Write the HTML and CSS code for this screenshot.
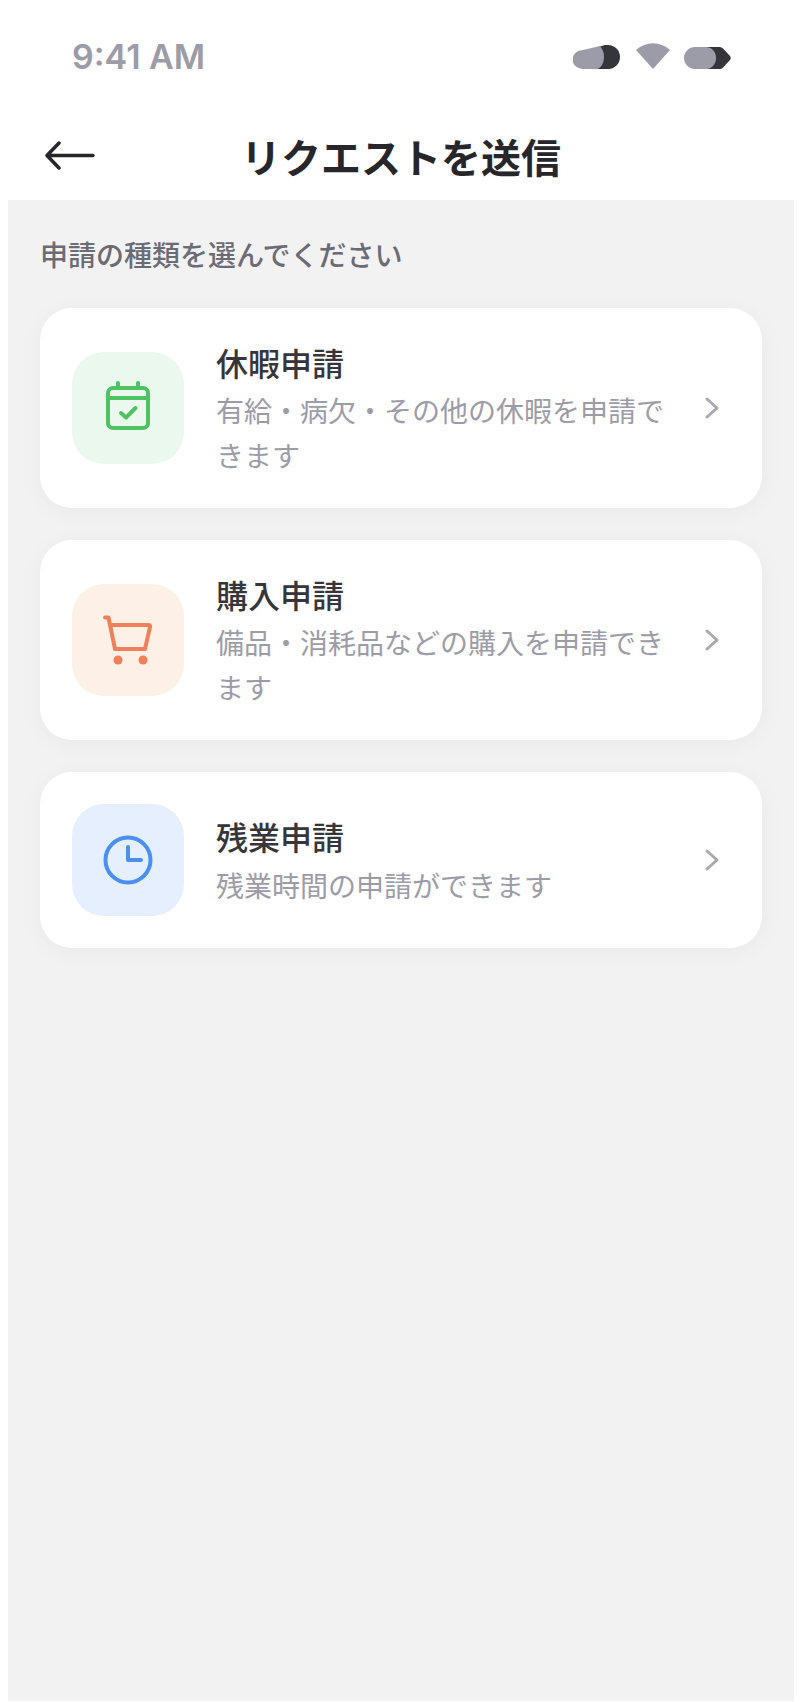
FILE: index.html
```html
<!DOCTYPE html>
<html lang="ja">
<head>
<meta charset="utf-8">
<title>リクエストを送信</title>
<link rel="stylesheet" href="styles.css">
</head>
<body>
<div class="screen">
  <header class="top">
    <div class="status">
      <span class="time">9:41 AM</span>
      <div class="status-icons">
        <svg class="ic-signal" width="47" height="24" viewBox="0 0 47 24"><path class="dark" d="M22 3 L32 0 H35 A12 12 0 0 1 35 24 H22 Z"/><path class="mid" d="M10 5 L27 1 C27 1 31 5 31 12 C31 19 27 24 24 24 H11 A11 9.500 0 0 1 10 5 Z"/></svg>
        <svg class="ic-wifi" width="34" height="26" viewBox="0 0 34 26"><path class="mid" d="M0 7 C10 -2 24 -2 34 7 L17 26 Z"/></svg>
        <svg class="ic-batt" width="47" height="22" viewBox="0 0 47 22"><path class="dark" d="M22 0 H36 Q38 0 40 2.500 L46 9 Q47.500 11 46 13 L40 19.500 Q38 22 36 22 H22 Z"/><path class="mid" d="M11 0 H22 C28 0 32 5 32 11 C32 17 28 22 22 22 H11 A11 11 0 0 1 11 0 Z"/></svg>
      </div>
    </div>
    <div class="nav">
      <svg class="back" width="50" height="30" viewBox="0 0 50 30"><path d="M48 14.500 H2 M14 2 L2 14.500 L14 27"/></svg>
      <h1 class="title">リクエストを送信</h1>
    </div>
  </header>
  <main class="content">
    <p class="label">申請の種類を選んでください</p>
    <div class="list">
      <div class="card">
        <div class="tile tile-green">
          <svg class="glyph" width="56" height="56" viewBox="0 0 56 56"><rect x="8" y="8" width="40" height="40" rx="5"/><path d="M8 18 H48 M18 3 V8 M38 3 V8"/><path d="M21 33 L26 37.500 L35.500 28"/></svg>
        </div>
        <div class="text">
          <div class="name">休暇申請</div>
          <div class="desc">有給・病欠・その他の休暇を申請できます</div>
        </div>
        <svg class="chev" width="32" height="32" viewBox="0 0 32 32"><path d="M9 7 L19 16 L9 25"/></svg>
      </div>
      <div class="card">
        <div class="tile tile-orange">
          <svg class="glyph" width="56" height="56" viewBox="0 0 56 56"><path d="M5 5.500 H8.500 L15 37 H45 L50 15 Q50.500 13 48.500 13 H10"/><circle class="fill" cx="18" cy="48" r="4.500"/><circle class="fill" cx="43" cy="48" r="4.500"/></svg>
        </div>
        <div class="text">
          <div class="name">購入申請</div>
          <div class="desc">備品・消耗品などの購入を申請できます</div>
        </div>
        <svg class="chev" width="32" height="32" viewBox="0 0 32 32"><path d="M9 7 L19 16 L9 25"/></svg>
      </div>
      <div class="card">
        <div class="tile tile-blue">
          <svg class="glyph" width="56" height="56" viewBox="0 0 56 56"><circle cx="28" cy="28" r="22.500"/><path d="M28 15 V28 H41"/></svg>
        </div>
        <div class="text">
          <div class="name">残業申請</div>
          <div class="desc">残業時間の申請ができます</div>
        </div>
        <svg class="chev" width="32" height="32" viewBox="0 0 32 32"><path d="M9 7 L19 16 L9 25"/></svg>
      </div>
    </div>
  </main>
</div>
</body>
</html>
```
FILE: styles.css
```css
html, body { height: 100%; }
* { box-sizing: border-box; }
body {
  margin: 8px 8px 1px;
  height: 1693px;
  background: #fff;
  font-family: "Noto Sans CJK JP", "Noto Sans", sans-serif;
  color: #2a2a2f;
  overflow: hidden;
}
.screen { display: flex; flex-direction: column; height: 100%; }
.top { background: #fff; flex: none; }
.status {
  height: 96px;
  display: flex;
  align-items: center;
  justify-content: space-between;
  padding: 0 63px 0 64px;
}
.time {
  font-family: "Inter", "Noto Sans", sans-serif;
  font-size: 34px;
  font-weight: 600;
  color: #9c9ca8;
  line-height: 42px;
  padding-top: 2px;
}
.status-icons { display: flex; align-items: flex-end; gap: 14px; }
.ic-signal { margin-right: 2px; }
.dark { fill: #35353c; }
.mid { fill: #9c9ca8; }
.nav {
  position: relative;
  height: 96px;
  padding-top: 8px;
  display: flex;
  align-items: center;
  justify-content: center;
}
.back {
  position: absolute;
  left: 37px;
  top: 37px;
  fill: none;
  stroke: #26262b;
  stroke-width: 3.500;
  stroke-linecap: round;
  stroke-linejoin: round;
}
.title {
  margin: 0;
  font-size: 40px;
  font-weight: 700;
  line-height: 56px;
  color: #26262b;
}
.content {
  flex: 1;
  background: #f2f2f3;
  padding: 34px 32px 0;
}
.label {
  margin: 0 0 34px;
  font-size: 28px;
  font-weight: 500;
  line-height: 40px;
  color: #6b6b76;
}
.list { display: flex; flex-direction: column; gap: 32px; }
.card {
  display: flex;
  align-items: center;
  gap: 32px;
  padding: 32px;
  background: #fff;
  border-radius: 32px;
  box-shadow: 0 4px 24px rgba(0, 0, 0, 0.04);
}
.tile {
  flex: none;
  width: 112px;
  height: 112px;
  border-radius: 32px;
  display: flex;
  align-items: center;
  justify-content: center;
}
.tile-green { background: #ebf8ee; color: #4fc264; }
.tile-orange { background: #fdf0e7; color: #f08058; }
.tile-blue { background: #e5effe; color: #4b8ff0; }
.glyph {
  fill: none;
  stroke: currentColor;
  stroke-width: 4;
  stroke-linecap: round;
  stroke-linejoin: round;
}
.glyph .fill { fill: currentColor; stroke: none; }
.text { flex: 1; min-width: 0; margin: 2px 0 -2px; }
.name {
  font-size: 32px;
  font-weight: 500;
  line-height: 40px;
  margin-bottom: 6.400px;
  color: #35353a;
}
.desc {
  font-size: 28px;
  line-height: 44.800px;
  color: #9c9ca8;
}
.chev {
  flex: none;
  fill: none;
  stroke: #a8a8ae;
  stroke-width: 3;
  stroke-linecap: round;
  stroke-linejoin: round;
}
```
